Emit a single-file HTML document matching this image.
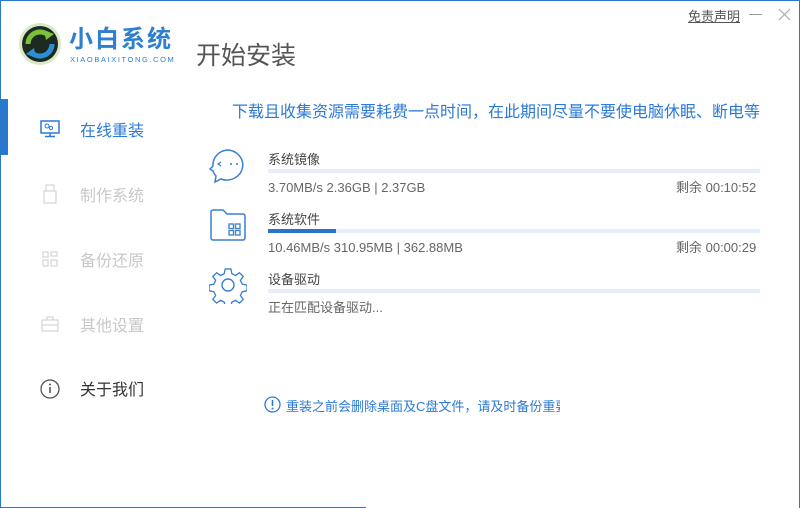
<!DOCTYPE html>
<html><head><meta charset="utf-8"><style>
*{margin:0;padding:0;box-sizing:border-box;line-height:1}
body{width:800px;height:508px;overflow:hidden;background:#fff;font-family:"Liberation Sans","Noto Sans CJK SC",sans-serif;position:relative}
.a{position:absolute;white-space:nowrap}
.bl{color:#2c7ad6}
.nav{position:absolute;left:80px;font-size:16px;color:#c8c8c8}
.bar{position:absolute;left:268px;width:492px;height:4px;background:#e6eef9}
.t{position:absolute;left:268px;font-size:13px;color:#444}
.s{position:absolute;font-size:13px;color:#666}
</style></head><body>
<div class="a" style="left:0;top:0;width:800px;height:1px;background:#2a78cc"></div>
<div class="a" style="left:0;top:0;width:1px;height:508px;background:#2a78cc"></div>
<div class="a" style="right:0;top:0;width:1px;height:508px;background:#2a78cc"></div>
<div class="a" style="left:0;bottom:0;width:366px;height:1px;background:#2a78cc"></div>

<svg class="a" style="left:18px;top:22px" width="44" height="44" viewBox="0 0 44 44">
<circle cx="22" cy="22" r="21" fill="#d9e7c6"/><circle cx="22" cy="22" r="18" fill="#1d2a22"/>
<path d="M10 22a12 12 0 0 1 20-9" stroke="#7cc13a" stroke-width="5" fill="none"/>
<path d="M34 22a12 12 0 0 1-20 9" stroke="#2a8fd8" stroke-width="5" fill="none"/>
<path d="M26 8l10 4-8 6z" fill="#7cc13a"/><path d="M18 36l-10-4 8-6z" fill="#2a8fd8"/>
</svg>
<div class="a" style="left:69px;top:28px;font-size:24px;font-weight:bold;letter-spacing:2px;color:#2f7fd0">小白系统</div>
<div class="a" style="left:70px;top:56px;font-size:7.5px;letter-spacing:1.6px;color:#2f7fd0">XIAOBAIXITONG.COM</div>
<div class="a" style="left:196px;top:44px;font-size:25px;color:#555">开始安装</div>

<div class="a" style="left:688px;top:10px;font-size:13px;color:#555;text-decoration:underline">免责声明</div>
<div class="a" style="left:749px;top:14px;width:13px;height:1px;background:#999"></div>
<svg class="a" style="left:778px;top:8px" width="13" height="13"><path d="M1 1l11 11M12 1L1 12" stroke="#aaa" stroke-width="1.2"/></svg>

<div class="a" style="left:0;top:99px;width:8px;height:56px;background:#2a78cc"></div>
<svg class="a" style="left:40px;top:120px" width="20" height="18" viewBox="0 0 20 18"><rect x="1" y="1" width="18" height="12" fill="none" stroke="#2c7ad6" stroke-width="1.5"/><path d="M10 13v3M5 16.5h10" stroke="#2c7ad6" stroke-width="1.5"/><circle cx="7" cy="6" r="2" fill="none" stroke="#2c7ad6"/><circle cx="11" cy="8" r="1.6" fill="none" stroke="#2c7ad6"/></svg>
<div class="nav" style="top:124px;color:#2c7ad6">在线重装</div>
<svg class="a" style="left:43px;top:184px" width="14" height="20"><rect x="3" y="1" width="8" height="6" fill="none" stroke="#ccc"/><rect x="1" y="7" width="12" height="12" fill="none" stroke="#ccc"/></svg>
<div class="nav" style="top:189px">制作系统</div>
<svg class="a" style="left:42px;top:251px" width="16" height="16"><g fill="none" stroke="#ccc"><rect x="1" y="1" width="5" height="5"/><rect x="9" y="1" width="6" height="4"/><rect x="1" y="9" width="5" height="6"/><rect x="9" y="9" width="6" height="6"/></g></svg>
<div class="nav" style="top:254px">备份还原</div>
<svg class="a" style="left:41px;top:316px" width="18" height="16"><g fill="none" stroke="#ccc"><rect x="1" y="4" width="16" height="11"/><rect x="6" y="1" width="6" height="3"/><path d="M1 9h16"/></g></svg>
<div class="nav" style="top:319px">其他设置</div>
<svg class="a" style="left:40px;top:379px" width="20" height="20"><circle cx="10" cy="10" r="9" fill="none" stroke="#555" stroke-width="1.3"/><path d="M10 8v6" stroke="#555" stroke-width="1.6"/><circle cx="10" cy="5.5" r="1" fill="#555"/></svg>
<div class="nav" style="top:383px;color:#333">关于我们</div>

<div class="a bl" style="left:232px;top:105px;font-size:16px">下载且收集资源需要耗费一点时间，在此期间尽量不要使电脑休眠、断电等</div>

<svg class="a" style="left:209px;top:148px" width="38" height="36" viewBox="0 0 38 36"><path d="M18 2a16 15 0 1 1-6 29l-6 3 1-6a16 15 0 0 1-3-5l-3-2 3-3a16 15 0 0 1 14-16z" fill="none" stroke="#3a7fd0" stroke-width="1.5"/><path d="M12 14l-3 2 3 2" fill="none" stroke="#3a7fd0" stroke-width="1.3"/><circle cx="22" cy="16" r="1" fill="#3a7fd0"/><circle cx="28" cy="16" r="1" fill="#3a7fd0"/></svg>
<div class="t" style="top:153px">系统镜像</div>
<div class="bar" style="top:169px"></div>
<div class="s" style="left:268px;top:181px">3.70MB/s 2.36GB | 2.37GB</div>
<div class="s" style="left:676px;top:181px">剩余 00:10:52</div>

<svg class="a" style="left:210px;top:209px" width="36" height="32" viewBox="0 0 36 32"><path d="M1 3a2 2 0 0 1 2-2h10l4 4h16a2 2 0 0 1 2 2v22a2 2 0 0 1-2 2H3a2 2 0 0 1-2-2z" fill="none" stroke="#3a7fd0" stroke-width="1.5"/><g fill="none" stroke="#3a7fd0" stroke-width="1.3"><rect x="19" y="15" width="4.5" height="4.5"/><rect x="25.5" y="15" width="4.5" height="4.5"/><rect x="19" y="21.5" width="4.5" height="4.5"/><rect x="25.5" y="21.5" width="4.5" height="4.5"/></g></svg>
<div class="t" style="top:213px">系统软件</div>
<div class="bar" style="top:229px"></div>
<div class="a" style="left:268px;top:229px;width:68px;height:4px;background:#2a74c8"></div>
<div class="s" style="left:268px;top:241px">10.46MB/s 310.95MB | 362.88MB</div>
<div class="s" style="left:676px;top:241px">剩余 00:00:29</div>

<svg class="a" style="left:209px;top:266px" width="38" height="38" viewBox="0 0 38 38"><path d="M16 2h6l1 5 4 2 4-3 4 4-3 4 2 4 5 1v6l-5 1-2 4 3 4-4 4-4-3-4 2-1 5h-6l-1-5-4-2-4 3-4-4 3-4-2-4-5-1v-6l5-1 2-4-3-4 4-4 4 3 4-2z" fill="none" stroke="#3a7fd0" stroke-width="1.4" stroke-linejoin="round" transform="translate(1,1) scale(0.95)"/><circle cx="19" cy="19" r="6" fill="none" stroke="#3a7fd0" stroke-width="1.4"/></svg>
<div class="t" style="top:273px">设备驱动</div>
<div class="bar" style="top:289px"></div>
<div class="s" style="left:268px;top:301px">正在匹配设备驱动...</div>

<svg class="a" style="left:264px;top:396px" width="17" height="17"><circle cx="8.5" cy="8.5" r="7.5" fill="none" stroke="#2c7ad6" stroke-width="1.3"/><path d="M8.5 4v6" stroke="#2c7ad6" stroke-width="1.6"/><circle cx="8.5" cy="12.5" r="1" fill="#2c7ad6"/></svg>
<div class="a bl" style="left:286px;top:400px;width:274px;overflow:hidden;font-size:13px">重装之前会删除桌面及C盘文件，请及时备份重要资料</div>
</body></html>
